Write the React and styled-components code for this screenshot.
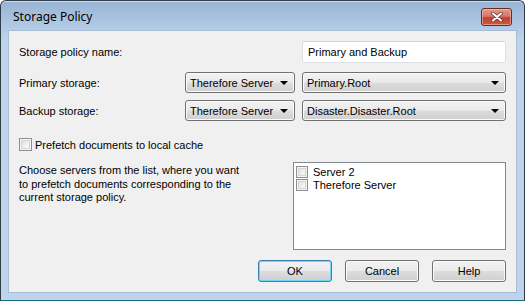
import React from 'react';
import styled, { createGlobalStyle } from 'styled-components';

const GlobalStyle = createGlobalStyle`
  html, body {
    margin: 0;
    padding: 0;
    background: #ffffff;
  }
  body {
    font-family: "Liberation Sans", Arial, sans-serif;
    font-size: 11px;
    color: #000;
  }
`;

const Window = styled.div`
  width: 525px;
  height: 301px;
  box-sizing: border-box;
  display: flex;
  flex-direction: column;
  border: 1px solid #2f3b45;
  border-bottom-color: #1c6f8c;
  border-radius: 6px 6px 0 0;
  background: linear-gradient(to bottom, #98b4d4 0px, #b4cce6 29px, #bed4ec 40px, #bed4ec 100%);
  padding: 0 7px 7px;
  box-shadow: inset 0 1px 0 rgba(255, 255, 255, 0.5);
`;

const TitleBar = styled.div`
  height: 29px;
  display: flex;
  align-items: center;
  justify-content: space-between;
  padding: 0 5px 0 5px;
`;

const Title = styled.span`
  font-family: "Noto Sans", "Open Sans", sans-serif;
  font-size: 12px;
  color: #000;
  margin-top: 1px;
`;

const CloseButton = styled.div`
  width: 29px;
  height: 16px;
  margin-top: 3px;
  border: 1px solid #6e2a22;
  border-radius: 3px;
  display: flex;
  align-items: center;
  justify-content: center;
  background: linear-gradient(to bottom, #e29a8a 0%, #d4786a 45%, #c0412f 55%, #c85a44 100%);
  box-shadow: inset 0 0 0 1px rgba(255, 210, 200, 0.5);
`;

const Client = styled.div`
  flex: 1;
  background: #f0f0f0;
  border: 1px solid #a9bdd2;
  padding: 10px;
  display: flex;
  flex-direction: column;
`;

const Row = styled.div`
  display: flex;
  align-items: center;
  height: ${(p) => p.h || 21}px;
  margin-top: ${(p) => p.top || 0}px;
`;

const Label = styled.span`
  width: ${(p) => (p.wide ? 'auto' : '166px')};
  flex: ${(p) => (p.wide ? 1 : 'none')};
`;

const TextInput = styled.div`
  width: 204px;
  height: 22px;
  box-sizing: border-box;
  background: #ffffff;
  border: 1px solid #dde1e6;
  border-top-color: #cfd3d8;
  border-radius: 2px;
  padding-left: 5px;
  display: flex;
  align-items: center;
`;

const Combo = styled.div`
  width: ${(p) => p.w}px;
  height: 21px;
  box-sizing: border-box;
  margin-left: ${(p) => p.ml || 0}px;
  border: 1px solid #707070;
  border-radius: 3px;
  background: linear-gradient(to bottom, #f2f2f2 0%, #ebebeb 48%, #dddddd 52%, #cfcfcf 100%);
  box-shadow: inset 0 0 0 1px #fbfbfb;
  display: flex;
  align-items: center;
  justify-content: space-between;
  padding: 0 6px 0 4px;
`;

const Arrow = styled.span`
  width: 0;
  height: 0;
  border-left: 4px solid transparent;
  border-right: 4px solid transparent;
  border-top: 4px solid #000;
`;

const CheckRow = styled.label`
  display: flex;
  align-items: center;
  gap: ${(p) => p.gap || 3}px;
  height: ${(p) => p.h || 13}px;
  margin-top: ${(p) => p.top || 0}px;
  margin-left: ${(p) => p.ml || 0}px;
`;

const Box = styled.span`
  width: ${(p) => p.size}px;
  height: ${(p) => p.size}px;
  box-sizing: border-box;
  border: 1px solid #8e8f8f;
  background: linear-gradient(135deg, #d8d8d8 0%, #f2f2f2 60%, #ffffff 100%);
  box-shadow: inset 0 0 0 1px #f4f4f4, inset 0 0 0 2px #d5d5d5;
  flex: none;
`;

const Lower = styled.div`
  display: grid;
  grid-template-columns: 1fr 213px;
  margin-top: 11px;
`;

const Description = styled.p`
  margin: 0;
  padding-top: 2px;
  line-height: 13.5px;
`;

const ListBox = styled.div`
  height: 88px;
  box-sizing: border-box;
  background: #ffffff;
  border: 1px solid #828790;
  padding-top: 2px;
`;

const Buttons = styled.div`
  display: flex;
  justify-content: flex-end;
  gap: 13px;
  margin-top: 10px;
`;

const Button = styled.div`
  width: 74px;
  height: 22px;
  box-sizing: border-box;
  border: 1px solid ${(p) => (p.primary ? '#3c7fb1' : '#707070')};
  border-radius: 3px;
  background: linear-gradient(to bottom, #f2f2f2 0%, #ebebeb 48%, #dddddd 52%, #cfcfcf 100%);
  box-shadow: inset 0 0 0 1px ${(p) => (p.primary ? '#6fd4f7' : '#fbfbfb')};
  display: flex;
  align-items: center;
  justify-content: center;
`;

const servers = ['Server 2', 'Therefore Server'];

export default function App() {
  return (
    <>
      <GlobalStyle />
      <Window>
        <TitleBar>
          <Title>Storage Policy</Title>
          <CloseButton>
            <svg width="12" height="10" viewBox="0 0 12 10">
              <path d="M2 1.5 L10 8.5 M10 1.5 L2 8.5" stroke="#6b3a33" strokeWidth="3.6" strokeLinecap="round" />
              <path d="M2 1.5 L10 8.5 M10 1.5 L2 8.5" stroke="#ffffff" strokeWidth="2" strokeLinecap="round" />
            </svg>
          </CloseButton>
        </TitleBar>
        <Client>
          <Row h={22}>
            <Label wide>Storage policy name:</Label>
            <TextInput>Primary and Backup</TextInput>
          </Row>
          <Row top={9}>
            <Label>Primary storage:</Label>
            <Combo w={110}>
              Therefore Server
              <Arrow />
            </Combo>
            <Combo w={204} ml={7}>
              Primary.Root
              <Arrow />
            </Combo>
          </Row>
          <Row top={7}>
            <Label>Backup storage:</Label>
            <Combo w={110}>
              Therefore Server
              <Arrow />
            </Combo>
            <Combo w={204} ml={7}>
              Disaster.Disaster.Root
              <Arrow />
            </Combo>
          </Row>
          <CheckRow top={17}>
            <Box size={13} />
            Prefetch documents to local cache
          </CheckRow>
          <Lower>
            <Description>
              Choose servers from the list, where you want
              <br />
              to prefetch documents corresponding to the
              <br />
              current storage policy.
            </Description>
            <ListBox>
              {servers.map((s) => (
                <CheckRow key={s} h={13.5} gap={5} ml={2}>
                  <Box size={12} />
                  {s}
                </CheckRow>
              ))}
            </ListBox>
          </Lower>
          <Buttons>
            <Button primary>OK</Button>
            <Button>Cancel</Button>
            <Button>Help</Button>
          </Buttons>
        </Client>
      </Window>
    </>
  );
}
